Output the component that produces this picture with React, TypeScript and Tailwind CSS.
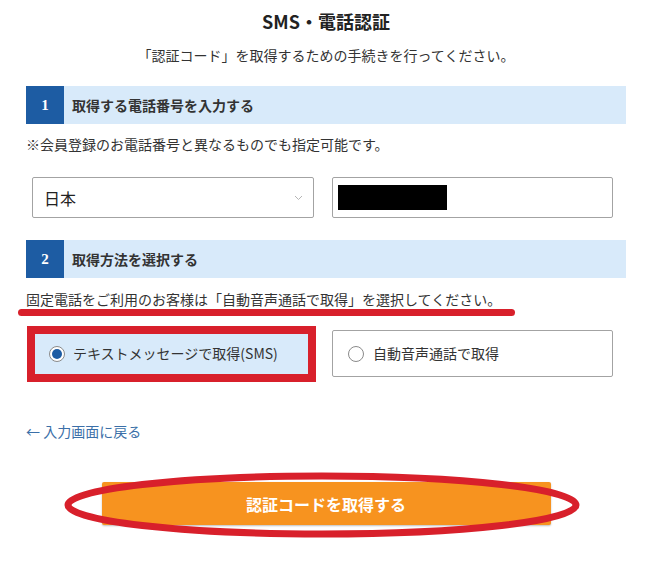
import React from "react";

const RED = "#d8202b";

function SectionHeader({ num, label }: { num: string; label: string }) {
  return (
    <div className="flex h-[38px] w-[600px] bg-[#d8eafa]">
      <div className="flex w-[38px] items-center justify-center bg-[#1d5ca3] font-['Liberation_Serif',serif] text-[15px] font-bold text-white">
        {num}
      </div>
      <div className="flex items-center pl-[8px] text-[14px] font-bold text-[#333]">{label}</div>
    </div>
  );
}

function Radio({ checked }: { checked: boolean }) {
  return (
    <span className="flex h-[16px] w-[16px] items-center justify-center rounded-full border border-[#8a8a8a] bg-white">
      {checked && <span className="h-[10px] w-[10px] rounded-full bg-[#1d5ca3]" />}
    </span>
  );
}

export default function App() {
  return (
    <div className="relative h-[565px] w-[668px] overflow-hidden bg-white font-['Noto_Sans_CJK_JP','Noto_Sans',sans-serif] text-[#333]">
      <div className="ml-[26px] flex w-[600px] flex-col">
        <h1 className="mt-[8px] h-[26px] text-center text-[18px] font-bold leading-[26px] text-[#222]">
          SMS・電話認証
        </h1>
        <p className="mt-[11px] h-[20px] text-center text-[14px] leading-[20px]">
          「認証コード」を取得するための手続きを行ってください。
        </p>

        <div className="mt-[21px]">
          <SectionHeader num="1" label="取得する電話番号を入力する" />
        </div>
        <p className="mt-[10px] h-[20px] text-[14px] leading-[20px]">
          ※会員登録のお電話番号と異なるものでも指定可能です。
        </p>

        <div className="mt-[23px] flex h-[41px] gap-[18px] pl-[6px]">
          <div className="flex w-[282px] items-center justify-between rounded-[2px] border border-[#a3a3a3] bg-white pl-[11px] pr-[10px]">
            <span className="text-[16px] text-[#222]">日本</span>
            <svg width="9" height="6" viewBox="0 0 9 6">
              <polyline points="1,1 4.5,4.5 8,1" fill="none" stroke="#b5b5b5" strokeWidth="1" />
            </svg>
          </div>
          <div className="flex w-[281px] items-center rounded-[2px] border border-[#a3a3a3] bg-white pl-[5px]">
            <div className="h-[25px] w-[109px] bg-black" />
          </div>
        </div>

        <div className="mt-[22px]">
          <SectionHeader num="2" label="取得方法を選択する" />
        </div>
        <p className="mt-[11px] h-[20px] text-[14px] leading-[20px]">
          固定電話をご利用のお客様は「自動音声通話で取得」を選択してください。
        </p>

        <div className="mt-[21px] flex h-[47px] gap-[18px] pl-[6px]">
          <div className="flex w-[282px] items-center gap-[8px] rounded-[2px] border border-[#a3a3a3] bg-[#d8eafa] pl-[16px]">
            <Radio checked />
            <span className="text-[14px] text-[#333]">テキストメッセージで取得(SMS)</span>
          </div>
          <div className="flex w-[281px] items-center gap-[9px] rounded-[2px] border border-[#a3a3a3] bg-white pl-[15px]">
            <Radio checked={false} />
            <span className="text-[14px] text-[#333]">自動音声通話で取得</span>
          </div>
        </div>

        <a className="mt-[44px] h-[20px] text-[14px] leading-[20px] text-[#3b6fa8]">← 入力画面に戻る</a>

        <div className="mt-[41px] flex justify-center">
          <button className="flex h-[43px] w-[449px] items-center justify-center rounded-[2px] bg-[#f7931f] text-[16px] font-bold text-white shadow-[0_1px_2px_rgba(0,0,0,0.25)]">
            認証コードを取得する
          </button>
        </div>
      </div>

      {/* annotations */}
      <div className={`absolute left-[18px] top-[309px] h-[7px] w-[497px] rounded-full bg-[#d8202b]`} />
      <div className="absolute left-[27px] top-[326px] h-[56px] w-[289px] border-[8px] border-[#d8202b]" />
      <svg className="absolute left-[62px] top-[470px]" width="520" height="70" viewBox="0 0 520 70">
        <ellipse cx="260" cy="35" rx="254" ry="29" fill="none" stroke={RED} strokeWidth="7" />
      </svg>
    </div>
  );
}
